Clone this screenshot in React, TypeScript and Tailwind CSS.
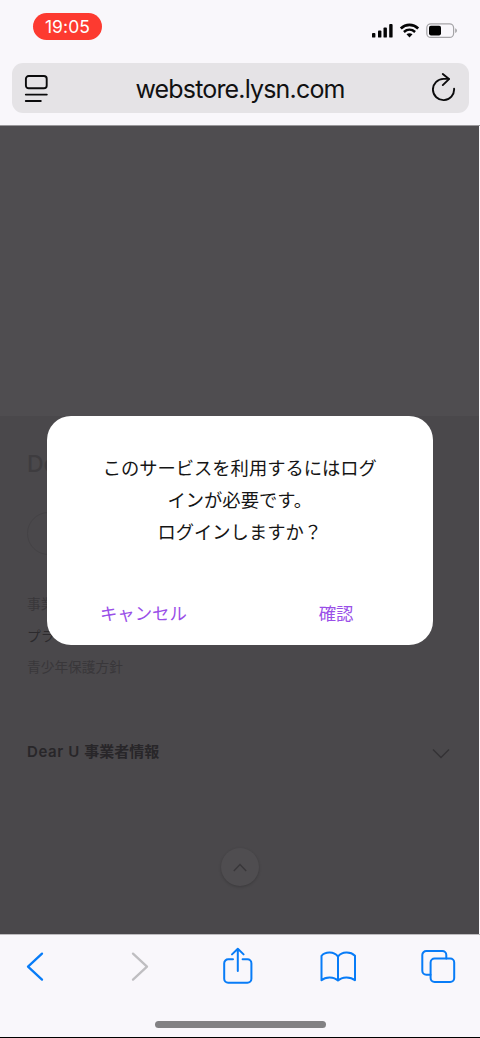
import type { ReactNode } from 'react';

const FOOTER_LINKS = [
  { label: '事業者情報', className: 'text-[#39373a]' },
  { label: 'プライバシーポリシー', className: 'text-[#2c2a2d]' },
  { label: '青少年保護方針', className: 'text-[#39373a]' },
];

function StatusBar() {
  return (
    <div className="flex h-[63px] items-start justify-between pl-[33px] pr-[22px] pt-[13px]">
      <div className="flex h-[27px] w-[69px] items-center justify-center rounded-full bg-[#fd3a30] pt-px text-[17.5px] tracking-[0.1px] text-white">
        19:05
      </div>
      <svg className="mt-[9px]" width="87" height="18" viewBox="371 22 87 18" fill="none">
        <g fill="#050506">
          <rect x="372" y="33" width="3.4" height="4.6" rx="0.9" />
          <rect x="378" y="30.5" width="3.4" height="7.1" rx="0.9" />
          <rect x="383.5" y="27.5" width="3.4" height="10.1" rx="0.9" />
          <rect x="389.2" y="24" width="3.4" height="13.6" rx="0.9" />
          <path d="M409.5 37.4l-3-3.1c1.7-1.5 4.3-1.5 6 0z" />
        </g>
        <path d="M400.8 28.4c5-4.6 12.4-4.6 17.4 0" stroke="#050506" strokeWidth="2.7" />
        <path d="M403.9 32c3.3-2.9 7.9-2.9 11.2 0" stroke="#050506" strokeWidth="2.5" />
        <rect x="426.8" y="23.8" width="26.8" height="13.6" rx="4" stroke="#a5a4a7" strokeWidth="1.2" />
        <rect x="429" y="25.8" width="12" height="9.6" rx="1.8" fill="#000" />
        <path d="M455.2 28.3c2.3.9 2.3 3.8 0 4.7z" fill="#a5a4a7" />
      </svg>
    </div>
  );
}

function AddressBar() {
  return (
    <div className="ml-[11.5px] mr-[11.5px] flex h-[50px] items-center justify-between rounded-[11px] bg-[#e5e3e6] pl-[12.5px] pr-[11.5px]">
      <svg width="24" height="30" viewBox="0 0 24 30" fill="none" stroke="#0b0b0c" strokeWidth="1.9" strokeLinecap="round">
        <rect x="1.9" y="3" width="20.8" height="12.3" rx="2.8" />
        <path d="M1.8 21.6h21M1.8 28h15" />
      </svg>
      <span className="pt-[3px] text-[25px] tracking-[-0.83px] text-[#111112]">webstore.lysn.com</span>
      <svg width="25" height="30" viewBox="0 0 25 30" fill="none" stroke="#0b0b0c" strokeWidth="1.9" strokeLinecap="round" strokeLinejoin="round">
        <path d="M22.1 15.8A10.6 10.6 0 1 1 11.5 5.9h5.2" />
        <path d="M10.8 1l6.200 5.100-6.200 6" />
      </svg>
    </div>
  );
}

function LoginDialog() {
  return (
    <div className="absolute left-[47px] top-[290px] flex h-[228.5px] w-[385.5px] flex-col rounded-[24px] bg-white pt-9">
      <p className="text-center text-[18.3px] leading-8 text-[#151515]">
        このサービスを利用するにはログ
        <br />
        インが必要です。
        <br />
        ログインしますか？
      </p>
      <div className="mt-[52px] flex text-[17.4px] leading-7 text-[#9a4fe8]">
        <button className="flex-1">キャンセル</button>
        <button className="flex-1">確認</button>
      </div>
    </div>
  );
}

function Page() {
  return (
    <main className="relative mr-px flex h-[808px] flex-col bg-[#4a484b]">
      <div className="h-[290px] shrink-0 bg-[#4f4d50]" />
      <div className="flex flex-1 flex-col px-[27px] pt-[32px]">
        <div className="text-[23px] font-medium leading-8 text-[#3e3c3f]">Dear U</div>
        <div className="mt-[32px] h-[43px] w-[150px] rounded-full border border-[#444245]" />
        <ul className="mt-[34px] text-[13.7px] leading-[31.7px]">
          {FOOTER_LINKS.map((link) => (
            <li key={link.label} className={link.className}>
              {link.label}
            </li>
          ))}
        </ul>
        <div className="mt-[52px] flex items-center justify-between text-[15px] font-bold leading-8 text-[#282629]">
          <span>
            <span className="font-semibold tracking-[0.6px]">Dear U </span>
            事業者情報
          </span>
          <svg className="mr-[2px] mt-[3px]" width="18" height="11" viewBox="0 0 18 11" fill="none" stroke="#343235" strokeWidth="1.4">
            <path d="M1 1.5l8 8 8-8" />
          </svg>
        </div>
        <button className="mt-[80px] flex h-[38px] w-[38px] items-center justify-center self-center rounded-full bg-[#4f4d50] shadow-[0_1px_3px_rgba(0,0,0,0.2)]">
          <svg width="14" height="9" viewBox="0 0 14 9" fill="none" stroke="#39373a" strokeWidth="1.4">
            <path d="M.8 8L7 1.4 13.2 8" />
          </svg>
        </button>
      </div>
      <LoginDialog />
    </main>
  );
}

function ToolIcon({ children }: { children: ReactNode }) {
  return (
    <svg
      width="38"
      height="40"
      viewBox="0 0 38 40"
      fill="none"
      stroke="#087cf7"
      strokeWidth="2"
      strokeLinecap="round"
      strokeLinejoin="round"
    >
      {children}
    </svg>
  );
}

function ToolBar() {
  return (
    <footer className="flex h-[103px] flex-col items-center border-t border-[#bdbbbe]">
      <div className="flex w-full items-center justify-between pl-[18px] pr-[22px] pt-[11px]">
        <ToolIcon>
          <path d="M24 7.6L10 20.6l14 13" strokeWidth="2.3" />
        </ToolIcon>
        <ToolIcon>
          <path d="M14 7.6l14 13-14 13" stroke="#bfbec1" strokeWidth="2.3" />
        </ToolIcon>
        <ToolIcon>
          <path d="M14 13.3H9.2a4 4 0 0 0-4 4v15.4a4 4 0 0 0 4 4h19.2a4 4 0 0 0 4-4V17.3a4 4 0 0 0-4-4h-4.8" />
          <path d="M18.8 25V3.4M13 8.4l5.8-5.6 5.8 5.6" />
        </ToolIcon>
        <ToolIcon>
          <path d="M18 10.6C14 5.4 5.5 5.4 1.5 9.8V34.2C5.5 30.4 14 30.4 18 34.6C22 30.4 30.5 30.4 35 34.2V9.8C30.5 5.4 22 5.4 18 10.6V34.6" />
        </ToolIcon>
        <ToolIcon>
          <path d="M10.5 28.7H6.3a4 4 0 0 1-4-4V9a4 4 0 0 1 4-4h16a4 4 0 0 1 4 4v3.4" />
          <rect x="10.6" y="12.5" width="23.6" height="23.5" rx="4" />
        </ToolIcon>
      </div>
      <div className="mt-[35px] h-[7px] w-[171px] rounded-full bg-[#828183]" />
    </footer>
  );
}

export default function App() {
  return (
    <div className="h-[1038px] w-[480px] overflow-hidden border-b border-black bg-[#f9f7fb] font-['Inter','Noto_Sans_CJK_JP',sans-serif]">
      <header className="h-[126px] border-b border-[#99979a]">
        <StatusBar />
        <AddressBar />
      </header>
      <Page />
      <ToolBar />
    </div>
  );
}
